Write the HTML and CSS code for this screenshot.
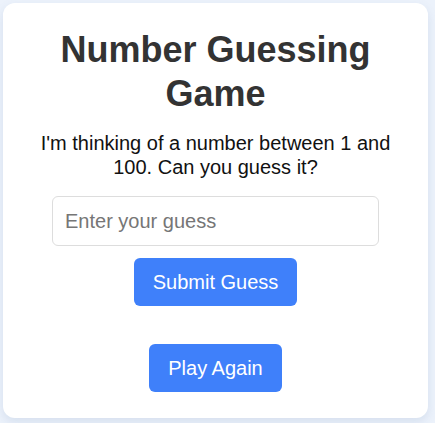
FILE: index.html
```html
<!DOCTYPE html>
<html lang="en">
<head>
<meta charset="utf-8">
<title>Number Guessing Game</title>
<link rel="stylesheet" href="styles.css">
</head>
<body>
  <main class="card">
    <h1 class="title">Number Guessing Game</h1>
    <p class="intro">I'm thinking of a number between 1 and 100. Can you guess it?</p>
    <input class="guess-input" type="text" placeholder="Enter your guess">
    <button class="btn btn-submit" type="button">Submit Guess</button>
    <p class="message"></p>
    <button class="btn btn-reset" type="button">Play Again</button>
  </main>
</body>
</html>
```

FILE: styles.css
```css
* { box-sizing: border-box; }
body {
  margin: 0;
  padding: 3px 7px 0 3px;
  background: #ecf2fb;
  font-family: "Liberation Sans", Arial, sans-serif;
  min-height: 423px;
}
.card {
  width: 425px;
  background: #ffffff;
  border-radius: 12px;
  box-shadow: 0 4px 10px rgba(90, 120, 170, 0.15);
  padding: 25px 24px 26px;
  display: flex;
  flex-direction: column;
  align-items: center;
  text-align: center;
}
.title {
  margin: 0;
  font-size: 36px;
  line-height: 44px;
  font-weight: bold;
  color: #333333;
}
.intro {
  margin: 15px 0 0;
  font-size: 20px;
  line-height: 24px;
  color: #111111;
}
.guess-input {
  margin-top: 17px;
  width: 327px;
  height: 50px;
  padding: 0 12px;
  border: 1px solid #dddddd;
  border-radius: 6px;
  font-family: inherit;
  font-size: 20px;
  color: #333333;
  outline: none;
}
.guess-input::placeholder { color: #767676; }
.btn {
  height: 48px;
  padding: 0 19px;
  border: none;
  border-radius: 6px;
  background: #3f80fa;
  color: #ffffff;
  font-family: inherit;
  font-size: 20px;
  cursor: pointer;
}
.btn-submit { margin-top: 12px; }
.message {
  margin: 0;
  height: 38px;
}
```
